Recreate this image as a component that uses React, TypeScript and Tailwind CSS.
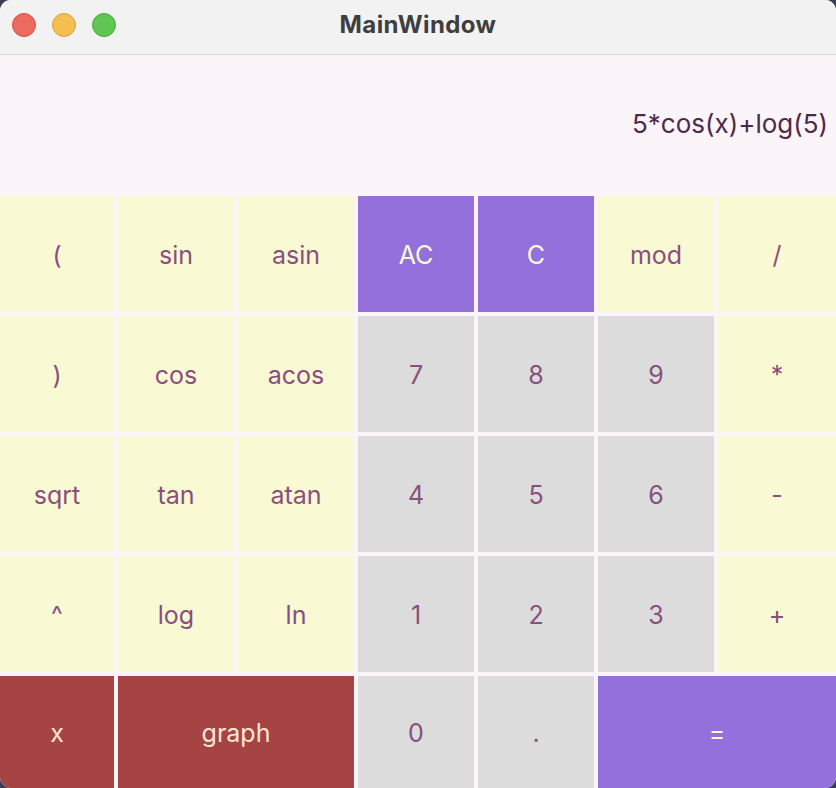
const FONT = "font-['Inter','Noto_Sans',sans-serif]";

type Key = { label: string; kind: "fn" | "num" | "op" | "var"; span?: string };

const rows: Key[][] = [
  [
    { label: "(", kind: "fn" },
    { label: "sin", kind: "fn" },
    { label: "asin", kind: "fn" },
    { label: "AC", kind: "op" },
    { label: "C", kind: "op" },
    { label: "mod", kind: "fn" },
    { label: "/", kind: "fn" },
  ],
  [
    { label: ")", kind: "fn" },
    { label: "cos", kind: "fn" },
    { label: "acos", kind: "fn" },
    { label: "7", kind: "num" },
    { label: "8", kind: "num" },
    { label: "9", kind: "num" },
    { label: "*", kind: "fn" },
  ],
  [
    { label: "sqrt", kind: "fn" },
    { label: "tan", kind: "fn" },
    { label: "atan", kind: "fn" },
    { label: "4", kind: "num" },
    { label: "5", kind: "num" },
    { label: "6", kind: "num" },
    { label: "-", kind: "fn" },
  ],
  [
    { label: "^", kind: "fn" },
    { label: "log", kind: "fn" },
    { label: "ln", kind: "fn" },
    { label: "1", kind: "num" },
    { label: "2", kind: "num" },
    { label: "3", kind: "num" },
    { label: "+", kind: "fn" },
  ],
  [
    { label: "x", kind: "var" },
    { label: "graph", kind: "var", span: "col-span-2" },
    { label: "0", kind: "num" },
    { label: ".", kind: "num" },
    { label: "=", kind: "op", span: "col-span-2" },
  ],
];

const kindClass = {
  fn: "bg-[#f9f9d3] text-[#8a4f7d]",
  num: "bg-[#dcdcdc] text-[#8a4f7d]",
  op: "bg-[#9370db] text-[#fafad2]",
  var: "bg-[#a64343] text-[#fde5d5]",
};

function Light({ color, border }: { color: string; border: string }) {
  return <span className={`block w-6 h-6 rounded-full border ${color} ${border}`} />;
}

export default function App() {
  return (
    <div className={`w-[836px] h-[788px] bg-[#3b3e54] ${FONT}`}>
      <div className="w-full h-full rounded-[11px] overflow-hidden flex flex-col bg-[#fbf5fa]">
        <div className="h-[55px] shrink-0 bg-[#f2f2f2] border-b border-[#d9d5d2] relative flex items-center justify-center">
          <div className="absolute left-3 top-[13px] flex gap-4">
            <Light color="bg-[#ed6a5e]" border="border-[#d65246]" />
            <Light color="bg-[#f5bf4f]" border="border-[#d9a13a]" />
            <Light color="bg-[#61c554]" border="border-[#4ea83f]" />
          </div>
          <span className="text-[24px] font-bold tracking-[0.4px] text-[#3e3e3e] -mt-1">MainWindow</span>
        </div>

        <div className="h-[141px] shrink-0 flex items-center justify-end pr-2 pb-1">
          <span className="text-[26px] text-[#4d2a4b]">5*cos(x)+log(5)</span>
        </div>

        <div className="flex-1 grid grid-cols-[114px_repeat(5,116px)_118px] grid-rows-[repeat(4,116px)_112px] gap-1">
          {rows.flat().map((k, i) => (
            <div
              key={i}
              className={`flex items-center justify-center pt-1 text-[25px] ${kindClass[k.kind]} ${k.span ?? ""}`}
            >
              {k.label}
            </div>
          ))}
        </div>
      </div>
    </div>
  );
}
